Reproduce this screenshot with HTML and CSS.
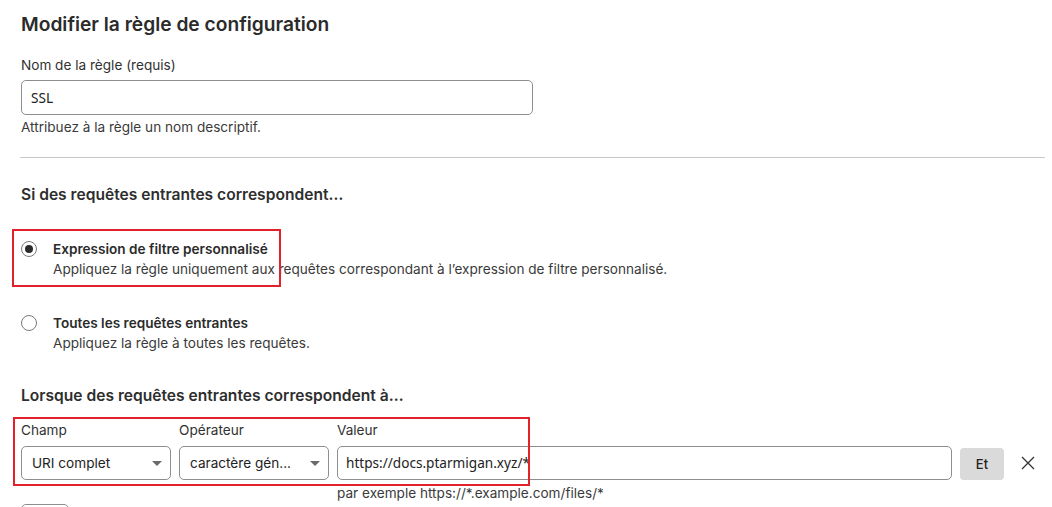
FILE: index.html
```html
<!DOCTYPE html>
<html lang="fr">
<head>
<meta charset="utf-8">
<title>Modifier la règle de configuration</title>
<link rel="stylesheet" href="styles.css">
</head>
<body>
<main class="page">
  <h1 class="title">Modifier la règle de configuration</h1>

  <div class="field">
    <label class="label">Nom de la règle (requis)</label>
    <div class="input name-input">SSL</div>
    <div class="help">Attribuez à la règle un nom descriptif.</div>
  </div>

  <hr class="divider">

  <h2 class="section">Si des requêtes entrantes correspondent…</h2>

  <div class="option opt-first">
    <span class="radio checked"></span>
    <div class="opt-text">
      <div class="opt-title">Expression de filtre personnalisé</div>
      <div class="opt-desc">Appliquez la règle uniquement aux requêtes correspondant à l’expression de filtre personnalisé.</div>
    </div>
  </div>

  <div class="option opt-second">
    <span class="radio"></span>
    <div class="opt-text">
      <div class="opt-title">Toutes les requêtes entrantes</div>
      <div class="opt-desc">Appliquez la règle à toutes les requêtes.</div>
    </div>
  </div>

  <h2 class="section section-2">Lorsque des requêtes entrantes correspondent à…</h2>

  <div class="expr">
    <div class="col-label">Champ</div>
    <div class="col-label">Opérateur</div>
    <div class="col-label">Valeur</div>
    <div></div>
    <div></div>

    <div class="select"><span>URI complet</span><span class="caret"></span></div>
    <div class="select"><span>caractère gén...</span><span class="caret"></span></div>
    <div class="input value-input">https://docs.ptarmigan.xyz/*</div>
    <div class="btn-and">Et</div>
    <div class="remove">
      <svg width="14" height="14" viewBox="0 0 14 14"><path d="M1 1 L13 13 M13 1 L1 13" stroke="#333" stroke-width="1.3" fill="none"/></svg>
    </div>

    <div></div>
    <div></div>
    <div class="hint">par exemple https://*.example.com/files/*</div>
  </div>

  <div class="bottom-btn"></div>

  <div class="annot annot-1"></div>
  <div class="annot annot-2"></div>
</main>
</body>
</html>
```

FILE: styles.css
```css
* { box-sizing: border-box; }
html, body { margin: 0; padding: 0; background: #fff; }
body {
  font-family: Inter, "Noto Sans", sans-serif;
  color: #313131;
  font-size: 13.6px;
  line-height: 20px;
  overflow: hidden;
  height: 507px;
}
.page {
  position: relative;
  padding: 0 7px 0 21px;
}
.title {
  margin: 0;
  padding-top: 10px;
  font-size: 19.2px;
  line-height: 28px;
  font-weight: 600;
  color: #2b2b2b;
}
.field { margin-top: 17px; }
.label { display: block; }
.input {
  border: 1px solid #8e8e8e;
  border-radius: 5px;
  font-family: "Noto Sans", "Open Sans", sans-serif;
  font-size: 13.6px;
  color: #222;
  display: flex;
  align-items: center;
}
.name-input {
  margin-top: 5px;
  width: 512px;
  height: 35px;
  padding-left: 9px;
}
.help { margin-top: 2px; color: #3a3a3a; }
.divider {
  margin: 20px 0 0 -1px;
  border: 0;
  border-top: 1px solid #c8c8c8;
  height: 0;
}
.section {
  margin: 25px 0 0;
  font-size: 15.6px;
  line-height: 24px;
  font-weight: 600;
  color: #2e2e2e;
}
.section-2 { margin-top: 31px; }
.option {
  display: flex;
  align-items: flex-start;
}
.opt-first { margin-top: 32px; }
.opt-second { margin-top: 34px; }
.radio {
  width: 16px;
  height: 16px;
  border: 1px solid #7a7a7a;
  border-radius: 50%;
  margin: 2px 16px 0 0;
  display: flex;
  align-items: center;
  justify-content: center;
  flex: none;
}
.radio.checked::after {
  content: "";
  width: 8px;
  height: 8px;
  border-radius: 50%;
  background: #2b2b2b;
}
.opt-title { font-weight: 600; color: #2b2b2b; }
.opt-desc { color: #3a3a3a; }
.expr {
  margin-top: 12px;
  display: grid;
  grid-template-columns: 150px 150px 615px 44px 1fr;
  column-gap: 8px;
}
.col-label { margin-bottom: 6px; }
.select {
  height: 34px;
  border: 1px solid #8e8e8e;
  border-radius: 5px;
  display: flex;
  align-items: center;
  justify-content: space-between;
  padding: 0 8px 0 10px;
  font-size: 13.6px;
  color: #222;
}
.caret {
  width: 0;
  height: 0;
  border-left: 5px solid transparent;
  border-right: 5px solid transparent;
  border-top: 5px solid #6b6b6b;
}
.value-input {
  height: 34px;
  padding-left: 8px;
}
.btn-and {
  margin-top: 2px;
  height: 32px;
  background: #dadada;
  border-radius: 4px;
  display: flex;
  align-items: center;
  justify-content: center;
  font-weight: 500;
  font-size: 13px;
  color: #222;
}
.remove {
  width: 32px;
  height: 34px;
  display: flex;
  align-items: center;
  justify-content: center;
}
.hint { margin-top: 3px; color: #3a3a3a; }
.bottom-btn {
  margin-top: 1px;
  width: 48px;
  height: 30px;
  border: 1px solid #8e8e8e;
  border-radius: 5px;
}
.annot {
  position: absolute;
  border: 2.5px solid #e3212b;
}
.annot-1 { left: 12px; top: 229px; width: 269px; height: 58px; }
.annot-2 { left: 13px; top: 417px; width: 517px; height: 69px; }
```
